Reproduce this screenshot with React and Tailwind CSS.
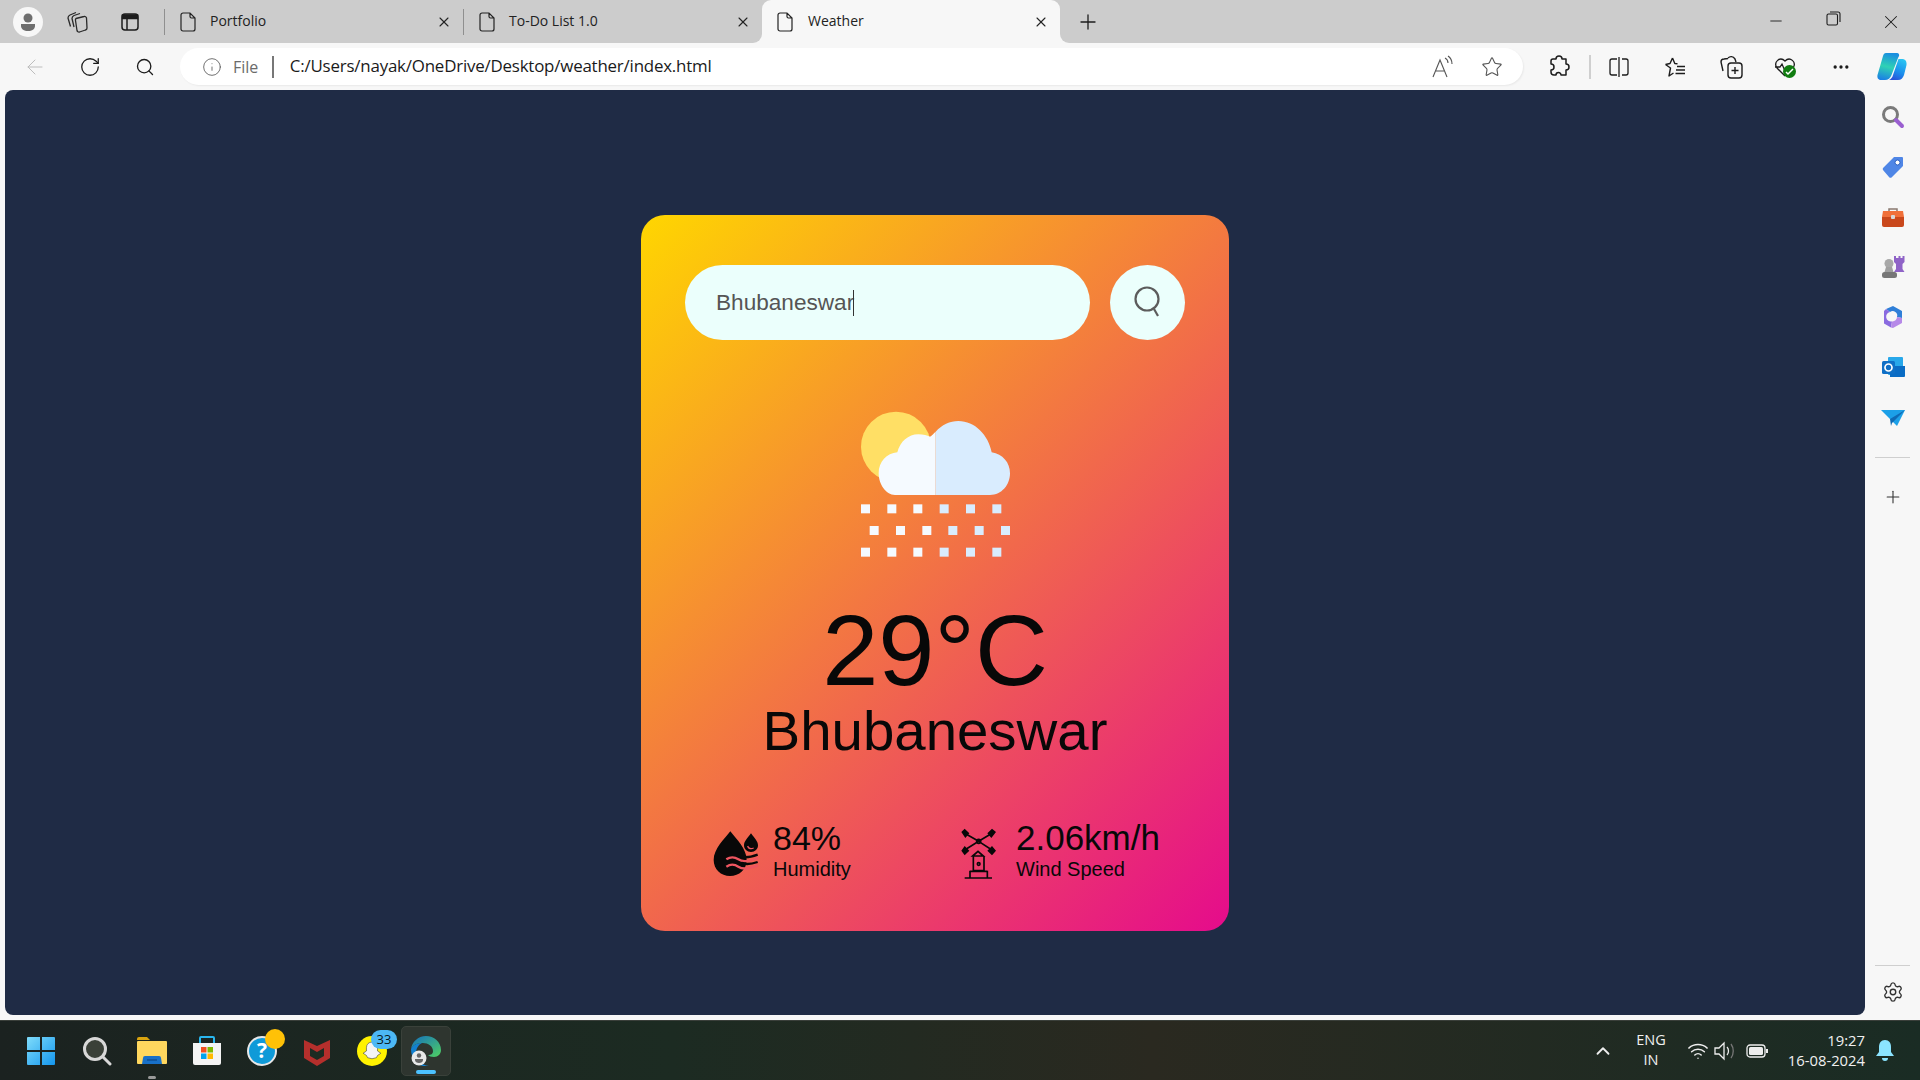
import React from "react";
import { ArrowLeft, RotateCw, Search, Info, Star, Ellipsis, Settings, ChevronUp, Wifi, X, Plus, Minus } from "lucide-react";

const FileIcon = () => (
  <svg width="17" height="20" viewBox="0 0 17 20" fill="none" stroke="#222" strokeWidth="1.2" className="shrink-0">
    <path d="M3 1h7l5 5v11a2 2 0 0 1-2 2H3a2 2 0 0 1-2-2V3a2 2 0 0 1 2-2zM10 1v3.5a1.5 1.5 0 0 0 1.5 1.5H15" />
  </svg>
);

const Tab = ({ title, active }) => (
  <div className={active ? "relative flex w-[298px] h-[43px] items-center pl-[15px] pr-[11px] bg-[#f7f7f7] rounded-t-[9px]" : "flex w-[298px] h-[43px] items-center pl-[15px] pr-[11px]"}>
    <FileIcon />
    <span className={active ? "ml-[14px] mb-[2px] text-[14px] text-[#222]" : "ml-[13px] mb-[2px] text-[14px] text-[#222]"}>{title}</span>
    <X size={16} strokeWidth={1.6} color="#222" className="ml-auto" />
    {active && (
      <>
        <div className="absolute left-[-9px] bottom-0 w-[9px] h-[9px] bg-[#f7f7f7]"><div className="w-full h-full bg-[#cccccc] rounded-br-[9px]" /></div>
        <div className="absolute right-[-9px] bottom-0 w-[9px] h-[9px] bg-[#f7f7f7]"><div className="w-full h-full bg-[#cccccc] rounded-bl-[9px]" /></div>
      </>
    )}
  </div>
);

const Sep = () => <div className="w-px h-[26px] bg-[#8f8f8f] shrink-0" />;

const WeatherIcon = () => (
  <svg width="150" height="150" viewBox="120 60 450 450" className="block mx-auto">
    <circle cx="228" cy="170" r="105" fill="#ffdf65" />
    <path d="M347 315H225C197 315 176 282 176 250C176 215 200 190 232 187C240 155 265 133 295 133C310 133 322 136 330 140C336 136 341 130 347 125Z" fill="#f5faff" />
    <path d="M347 315V125C365 105 390 93 415 93C465 93 505 135 515 187C548 192 570 218 570 250C570 285 545 315 510 315Z" fill="#d9ecfe" />
    {[343, 473].map((y) =>
      [123, 202, 280, 359, 438, 517].map((x, i) => <rect key={`${y}-${x}`} x={x} y={y} width="27" height="27" fill={i < 3 ? "#f5faff" : "#d9ecfe"} />)
    )}
    {[149, 228, 307, 385, 464, 543].map((x, i) => <rect key={x} x={x} y="408" width="27" height="27" fill={i < 3 ? "#f5faff" : "#d9ecfe"} />)}
  </svg>
);

const HumidityIcon = () => (
  <svg width="46" height="48" viewBox="66 88 138 144" className="shrink-0">
    <path d="M118 92C100 115 68 145 68 178C68 206 90 226 117 226C145 226 167 206 167 178C167 145 136 115 118 92Z" fill="#080808" />
    <path d="M180 98C170 112 159 122 159 134C159 146 168 154 180 154C192 154 201 146 201 134C201 122 190 112 180 98Z" fill="#080808" />
    <path d="M170 136C172 144 180 146 188 142" stroke="#ee5560" strokeWidth="4" fill="none" />
    <path d="M106 176C118 168 130 168 142 176C154 184 168 184 201 172" stroke="#ee5560" strokeWidth="7" fill="none" />
    <path d="M106 198C118 190 130 190 142 198C154 206 168 206 201 194" stroke="#ee5560" strokeWidth="7" fill="none" />
    <path d="M148 166C158 172 172 172 200 162M152 186C162 192 176 192 200 184" stroke="#080808" strokeWidth="7" fill="none" />
  </svg>
);

const WindIcon = () => (
  <svg width="38" height="52" viewBox="812 82 114 156" className="shrink-0" fill="none" stroke="#080808" strokeWidth="5">
    <path d="M868 122L826 98M868 122L908 98M868 122L826 148M868 122L908 148" />
    <path d="M816 94L826 84L840 98L828 112ZM920 94L908 84L894 98L906 112ZM816 150L826 136L840 150L826 164ZM920 150L908 136L894 150L908 164Z" fill="#080808" stroke="none" />
    <circle cx="868" cy="122" r="6" />
    <path d="M850 166L866 152L882 166ZM852 166V210H884V166M842 210V232M894 210V232M842 212H894M826 232H908" />
    <circle cx="868" cy="190" r="4" />
  </svg>
);

const Copilot = () => (
  <svg width="30" height="27" viewBox="0 0 30 27">
    <defs>
      <linearGradient id="cpa" x1="0.5" y1="0" x2="0.3" y2="1"><stop offset="0" stopColor="#1a8fe0" /><stop offset="0.5" stopColor="#2fd2b4" /><stop offset="1" stopColor="#1b80e4" /></linearGradient>
      <linearGradient id="cpb" x1="0.7" y1="0" x2="0.3" y2="1"><stop offset="0" stopColor="#2ac4f2" /><stop offset="0.6" stopColor="#1b8cec" /><stop offset="1" stopColor="#2a52d8" /></linearGradient>
    </defs>
    <path d="M9 0H20C22 0 22.500 2 22 3L21 5L14.500 22C13.500 25 11 27 8 27H4C1 27 0 24.500 .5 22L6 3C6.500 1 7.500 0 9 0Z" fill="url(#cpa)" />
    <path d="M21.500 6H25C28 6 30 8 29.500 12L27 22C26 25 24 27 21 27H12C14 26 15.500 24.500 16 22Z" fill="url(#cpb)" />
  </svg>
);

const SideCell = ({ children }) => <div className="flex h-[50px] w-full items-center justify-center">{children}</div>;

const TaskCell = ({ children }) => <div className="relative flex h-[60px] w-[55px] shrink-0 items-center justify-center">{children}</div>;

export default function App() {
  return (
    <div className="flex flex-col h-screen w-screen overflow-hidden bg-[#f7f7f7] font-['Open_Sans',sans-serif]">
      {/* Tab strip */}
      <div className="flex h-[43px] shrink-0 items-center bg-[#cccccc]">
        <div className="flex w-[55px] justify-center">
          <div className="relative flex h-[30px] w-[30px] items-center justify-center overflow-hidden rounded-full bg-[#f7f7f7]">
            <svg width="18" height="20" viewBox="0 0 18 20" fill="#6e6e6e"><circle cx="9" cy="6" r="4.5" /><path d="M2 12h14v2c0 3-3 5-7 5s-7-2-7-5z" /></svg>
          </div>
        </div>
        <div className="flex w-[44px] justify-center">
          <svg width="22" height="22" viewBox="0 0 22 22" fill="none" stroke="#2a2a2a" strokeWidth="1.300" strokeLinejoin="round">
            <path d="M10 7.500l8-2a2 2 0 0 1 2.500 1.500l.5 10a2 2 0 0 1-1.500 2l-6 2a2 2 0 0 1-2.500-1.500l-1.500-10a2 2 0 0 1 .5-2z" />
            <path d="M8 16L6 7.500C6 6 7 5 8 4.500l6-2" />
            <path d="M4.500 15.500L2 7C2 5.500 3 4.500 4 4l6-2.500" />
          </svg>
        </div>
        <div className="flex w-[62px] justify-center">
          <svg width="20" height="20" viewBox="0 0 20 20" fill="none" stroke="#1c1c1c" strokeWidth="1.5"><rect x="2" y="2" width="16" height="16" rx="3" /><path d="M2.500 3h15v3.500h-15z" fill="#1c1c1c" /><path d="M7 6.500V18" /></svg>
        </div>
        <div className="ml-[3px] flex"><Sep /></div>
        <Tab title="Portfolio" />
        <Sep />
        <Tab title="To-Do List 1.0" />
        <Tab title="Weather" active />
        <div className="ml-[8px] flex w-[40px] justify-center"><Plus size={24} strokeWidth={1.3} color="#1c1c1c" /></div>
        <div className="ml-auto flex">
          <div className="flex w-[58px] justify-center"><Minus size={18} strokeWidth={1.2} color="#1c1c1c" className="ml-[2px] mt-[1px]" /></div>
          <div className="flex w-[58px] justify-center">
            <svg width="15" height="15" viewBox="0 0 15 15" fill="none" stroke="#1c1c1c" strokeWidth="1.1"><rect x="1" y="3" width="10.500" height="11" rx="1.500" /><path d="M4 1h8a2 2 0 0 1 2 2v8" /></svg>
          </div>
          <div className="flex w-[58px] justify-center"><X size={22} strokeWidth={1.1} color="#1c1c1c" /></div>
        </div>
      </div>

      {/* Toolbar */}
      <div className="flex h-[47px] shrink-0 items-center bg-[#f7f7f7]">
        <div className="flex w-[70px] justify-center"><ArrowLeft size={24} strokeWidth={1} color="#bdbdbd" /></div>
        <div className="flex w-[40px] justify-center"><RotateCw size={22} strokeWidth={1.4} color="#1c1c1c" /></div>
        <div className="flex w-[70px] justify-center"><Search size={20} strokeWidth={1.6} color="#1c1c1c" /></div>
        <div className="flex h-[37px] w-[1343px] items-center rounded-full bg-white pl-[22px] pr-[20px] shadow-[1px_1px_2px_rgba(0,0,0,0.06)]">
          <Info size={20} strokeWidth={1} color="#555" />
          <span className="ml-[11px] text-[16px] text-[#6b6b6b]">File</span>
          <div className="ml-[14px] h-[22px] w-[1.500px] bg-[#777]" />
          <span className="ml-[16px] mb-[1px] text-[16.900px] tracking-[-0.2px] text-[#1a1a1a]">C:/Users/nayak/OneDrive/Desktop/weather/index.html</span>
          <div className="ml-auto flex items-center gap-[28px]">
            <svg width="22" height="24" viewBox="0 0 22 24" fill="none" stroke="#555" strokeWidth="1.1"><path d="M2 22L9 5l7 17M5 16h8M14 3c2 1 3 3 3 5M17 1c3 2 4 5 4 8" /></svg>
            <Star size={22} strokeWidth={1.2} color="#555" />
          </div>
        </div>
        <div className="ml-[14px] flex w-[44px] justify-center">
          <svg width="22" height="24" viewBox="0 0 22 24" fill="none" stroke="#1c1c1c" strokeWidth="1.5" strokeLinejoin="round"><path d="M8 4a3 3 0 0 1 6 0h4v5a3 3 0 0 1 0 6v5h-5a2.500 2.500 0 0 0-5 0H6c-2 0-3-1-3-3v-2a3 3 0 0 0 0-6V6c0-1 1-2 2-2z" /></svg>
        </div>
        <div className="ml-[8px] h-[24px] w-[2px] bg-[#cfcfcf]" />
        <div className="flex w-[56px] justify-center">
          <svg width="20" height="22" viewBox="0 0 20 22" fill="none" stroke="#1c1c1c" strokeWidth="1.3"><path d="M10 1v20M8 3H3a2 2 0 0 0-2 2v12a2 2 0 0 0 2 2h5M13 3h4a2 2 0 0 1 2 2v12a2 2 0 0 1-2 2h-4" /></svg>
        </div>
        <div className="flex w-[56px] justify-center">
          <svg width="22" height="22" viewBox="0 0 22 22" fill="none" stroke="#1c1c1c" strokeWidth="1.4" strokeLinejoin="round"><path d="M8.500 2l2.300 5.500 2.700.3M1.500 8.500l5 3.500L5 20l4.500-3M8.500 2L6 7.500 1.500 8.500M13 10.500h8M12 14h9M11.500 17.500h9.500" /></svg>
        </div>
        <div className="flex w-[56px] justify-center">
          <svg width="24" height="24" viewBox="0 0 24 24" fill="none" stroke="#1c1c1c" strokeWidth="1.4"><rect x="9" y="8" width="14" height="15" rx="3" /><path d="M16 12v7M12.500 15.500h7M9 3.500l-4 .5c-2 0-3 1.500-3 3l2 9M9 3c2-2 5-2 7 1l1 3" /></svg>
        </div>
        <div className="relative flex w-[52px] justify-center">
          <svg width="22" height="20" viewBox="0 0 22 20" fill="none" stroke="#1c1c1c" strokeWidth="1.3"><path d="M11 19L3 11C-1 5 6-1 11 4c5-5 12 1 8 7M1 10h5l2-3 3 7 2-4h3" /></svg>
          <div className="absolute left-[24px] top-[8px] flex h-[13px] w-[13px] items-center justify-center rounded-full bg-[#107c10]">
            <svg width="9" height="9" viewBox="0 0 9 9" fill="none" stroke="#fff" strokeWidth="1.5"><path d="M1 5l2 2 5-5" /></svg>
          </div>
        </div>
        <div className="flex w-[60px] justify-center"><Ellipsis size={20} strokeWidth={2} color="#1c1c1c" /></div>
        <div className="flex w-[42px] justify-center"><Copilot /></div>
      </div>

      {/* Middle */}
      <div className="flex min-h-0 flex-1">
        <div className="ml-[5px] mb-[5px] w-[1860px] rounded-[8px] bg-[#1f2b45] pt-[125px]">
          <div className="mx-auto h-[716px] w-[588px] rounded-[24px] bg-[linear-gradient(135deg,#ffd600,#e50b8c)] px-[44px] pt-[50px] font-['Liberation_Sans',sans-serif]">
            <div className="flex items-center justify-between">
              <div className="flex h-[75px] w-[405px] items-center rounded-full bg-[#ebfffc] pl-[31px] text-[22.600px] text-[#555]">
                Bhubaneswar<span className="ml-[-1px] h-[26px] w-px bg-[#333]" />
              </div>
              <div className="flex h-[75px] w-[75px] items-center justify-center rounded-full bg-[#ebfffc]">
                <svg width="28" height="32" viewBox="0 0 28 32" fill="none" stroke="#5c5c5c" strokeWidth="2.200" className="mb-[2px]"><circle cx="13" cy="13" r="11.500" /><path d="M20 23l4 7" /></svg>
              </div>
            </div>
            <div className="mt-[70px]"><WeatherIcon /></div>
            <div className="mt-[41px] text-center text-[101px] leading-[98px] text-[#080808]">29°C</div>
            <div className="mt-[2px] text-center text-[56.400px] leading-[60px] text-[#080808]">Bhubaneswar</div>
            <div className="mt-[59px] flex pl-[28px] text-[#080808]">
              <div className="flex w-[247px] items-center">
                <HumidityIcon />
                <div className="ml-[14px] mb-[6px]">
                  <div className="text-[34px] leading-[36px]">84%</div>
                  <div className="text-[20px] leading-[24px] mt-[1px]">Humidity</div>
                </div>
              </div>
              <div className="flex items-center">
                <WindIcon />
                <div className="ml-[18px] mb-[6px]">
                  <div className="text-[35px] leading-[36px]">2.06km/h</div>
                  <div className="text-[20px] leading-[24px] mt-[1px]">Wind Speed</div>
                </div>
              </div>
            </div>
          </div>
        </div>

        {/* Sidebar */}
        <div className="flex w-[55px] flex-col items-center pt-[2px]">
          <SideCell>
            <svg width="24" height="24" viewBox="0 0 24 24" fill="none"><circle cx="9.500" cy="9.500" r="7" stroke="#7a7a7a" strokeWidth="3" /><path d="M15 15l6 6" stroke="#9a5fd0" strokeWidth="4" strokeLinecap="round" /></svg>
          </SideCell>
          <SideCell>
            <svg width="24" height="24" viewBox="0 0 24 24"><path d="M13 2h8a1 1 0 0 1 1 1v8L11 22a2 2 0 0 1-3 0L2 15a2 2 0 0 1 0-2z" fill="#4f86e6" /><circle cx="16.500" cy="7.500" r="2.500" fill="#fff" stroke="#2c5fc0" /></svg>
          </SideCell>
          <SideCell>
            <svg width="24" height="22" viewBox="0 0 24 22"><path d="M8 5V3h8v2" fill="none" stroke="#8a7a70" strokeWidth="1.5" /><path d="M2 5h20l1 6H1z" fill="#f0703a" /><path d="M1 11h22v8a2 2 0 0 1-2 2H3a2 2 0 0 1-2-2z" fill="#c9481c" /><rect x="10" y="9" width="4" height="4" rx="1" fill="#d8d8d8" /></svg>
          </SideCell>
          <SideCell>
            <svg width="24" height="24" viewBox="0 0 24 24">
              <path d="M13 1h2v2h2.500V1h2v2h2V1h2v6l-2 2v5l2 3H13l2-3V9l-2-2z" fill="#8f63c7" />
              <circle cx="8" cy="8.500" r="4.500" fill="#a8a8a8" />
              <path d="M5 12h6l1.500 5h-9z" fill="#a0a0a0" />
              <rect x="1" y="17" width="15" height="6" rx="2.500" fill="#777" />
            </svg>
          </SideCell>
          <SideCell>
            <svg width="24" height="24" viewBox="0 0 24 24">
              <path d="M12 1l9 5v7l-5-1a4.500 4.500 0 0 0-7-5L5 4z" fill="#2f7fd8" />
              <path d="M3 6l2-2 4 3a4.500 4.500 0 0 0 2 9.500l-1 6-7-4z" fill="#8a6be0" />
              <path d="M21 13v5l-9 5-2-.5 1-6a4.500 4.500 0 0 0 5-4.500z" fill="#b689e8" />
            </svg>
          </SideCell>
          <SideCell>
            <svg width="24" height="24" viewBox="0 0 24 24"><rect x="7" y="2" width="15" height="18" rx="1" fill="#28a8ea" /><path d="M9 11h15v10a1 1 0 0 1-1 1H9z" fill="#0a6cc4" /><rect x="1" y="6" width="13" height="13" rx="1.500" fill="#0f6fc6" /><circle cx="7.500" cy="12.500" r="3.500" fill="none" stroke="#fff" strokeWidth="1.700" /></svg>
          </SideCell>
          <SideCell>
            <svg width="24" height="20" viewBox="0 0 24 20"><path d="M0 3h24L16 19 9 12z" fill="#1ca0e8" /><path d="M9 12L24 3 11 16l-1 3z" fill="#0f6ab4" /></svg>
          </SideCell>
          <div className="mt-[15px] h-px w-[35px] bg-[#cfcfcf]" />
          <div className="mt-[14px] w-full"><SideCell><Plus size={20} strokeWidth={1.3} color="#333" /></SideCell></div>
          <div className="mt-auto h-px w-[35px] bg-[#cfcfcf]" />
          <div className="mb-[3px] flex h-[51px] items-center"><Settings size={22} strokeWidth={1.5} color="#333" /></div>
        </div>
      </div>

      {/* Taskbar */}
      <div className="flex h-[60px] shrink-0 items-center border-t border-[#3a3f3a] bg-[linear-gradient(90deg,#1b2220,#1c2b22_35%,#2a2920_60%,#1a2c24)] pl-[13px] font-['Open_Sans',sans-serif] text-white">
        <TaskCell>
          <svg width="30" height="30" viewBox="0 0 30 30">
            <defs><linearGradient id="win" x1="0" y1="0" x2="1" y2="1"><stop offset="0" stopColor="#7fdcfa" /><stop offset="1" stopColor="#1496ee" /></linearGradient></defs>
            <path d="M1 2a1 1 0 0 1 1-1h12v13H1zM16 1h12a1 1 0 0 1 1 1v12H16zM1 16h13v13H2a1 1 0 0 1-1-1zM16 16h13v12a1 1 0 0 1-1 1H16z" fill="url(#win)" />
          </svg>
        </TaskCell>
        <TaskCell>
          <svg width="30" height="30" viewBox="0 0 30 30" fill="none" stroke="#d8d8d8" className="ml-[3px]"><circle cx="13" cy="13" r="10.500" strokeWidth="3" fill="#3a4038" /><path d="M21 21l7 7" strokeWidth="3" strokeLinecap="round" /></svg>
        </TaskCell>
        <TaskCell>
          <svg width="32" height="28" viewBox="0 0 32 28" className="ml-[3px]"><path d="M1 2a2 2 0 0 1 2-2h8l3 3h-13z" fill="#d9a30f" /><rect x="1" y="4" width="30" height="23" rx="1" fill="#ffd75e" /><path d="M6 27l1-6a2 2 0 0 1 2-2h14a2 2 0 0 1 2 2l1 6z" fill="#1870c8" /><path d="M11 23h10" stroke="#0e4f96" strokeWidth="1.500" /></svg>
          <div className="absolute bottom-[2px] left-[25px] h-[3px] w-[8px] rounded-full bg-[#9a9a9a]" />
        </TaskCell>
        <TaskCell>
          <svg width="30" height="31" viewBox="0 0 30 31" className="ml-[3px]"><path d="M8 8V3a1 1 0 0 1 1-1h12a1 1 0 0 1 1 1v5" fill="none" stroke="#29b6ee" strokeWidth="2" /><path d="M1 8h28v20a2 2 0 0 1-2 2H3a2 2 0 0 1-2-2z" fill="#f4f4f4" /><rect x="9" y="12" width="5.500" height="5.500" fill="#f25022" /><rect x="15.500" y="12" width="5.500" height="5.500" fill="#7fba00" /><rect x="9" y="18.500" width="5.500" height="5.500" fill="#00a4ef" /><rect x="15.500" y="18.500" width="5.500" height="5.500" fill="#ffb900" /></svg>
        </TaskCell>
        <TaskCell>
          <div className="ml-[3px] flex h-[30px] w-[30px] items-center justify-center rounded-full border-2 border-[#e8e8e8] bg-[#0f9ad8] text-[21px] font-bold leading-none text-white">?</div>
          <div className="absolute left-[32px] top-[8px] h-[20px] w-[20px] rounded-full bg-[#ffc107]" />
        </TaskCell>
        <TaskCell>
          <svg width="28" height="30" viewBox="0 0 28 30" className="ml-[3px]"><path d="M1 4l13 6 13-6v18L14 30 1 22z" fill="#b52f2c" /><path d="M7 12l7 4 7-4v8l-7 4-7-4z" fill="#1c2b22" /></svg>
        </TaskCell>
        <TaskCell>
          <div className="ml-[3px] flex h-[30px] w-[30px] items-center justify-center rounded-full bg-[#fff200]">
            <svg width="20" height="20" viewBox="0 0 18 18"><path d="M9 1c3 0 5 2 5 5v3l3 2-3 2-1 2-4 1-4-1-1-2-3-2 3-2V6c0-3 2-5 5-5z" fill="#f4f4f4" stroke="#333" strokeWidth=".5" /></svg>
          </div>
          <div className="absolute left-[28px] top-[9px] flex h-[19px] w-[26px] items-center justify-center rounded-full bg-[#4cb8f5] text-[13px] leading-none text-[#0a1820]">33</div>
        </TaskCell>
        <div className="relative ml-[3px] flex h-[50px] w-[50px] shrink-0 items-center justify-center rounded-[5px] border border-[#3a413a] bg-[#2e352f]">
          <svg width="30" height="30" viewBox="0 0 30 30">
            <defs><linearGradient id="edge" x1="0" y1="0" x2="1" y2="1"><stop offset="0" stopColor="#1470c0" /><stop offset="1" stopColor="#50d060" /></linearGradient></defs>
            <path d="M15 0c8 0 15 6 15 14 0 4-3 7-7 7-3 0-5-1-6-2 3 0 5-1 5-4 0-5-5-8-10-8C6 7 2 9 0 13 1 6 7 0 15 0z" fill="url(#edge)" />
            <path d="M0 13c2-4 6-6 11-6-4 2-6 6-6 10 0 6 5 12 13 13-10 2-18-6-18-17z" fill="#1280d0" />
            <circle cx="8" cy="22" r="7.500" fill="#e8e8e8" />
            <circle cx="8" cy="19.500" r="2.200" fill="#666" />
            <path d="M4 23h8v1c0 2-2 3-4 3s-4-1-4-3z" fill="#666" />
          </svg>
          <div className="absolute bottom-[1px] h-[4px] w-[20px] rounded-full bg-[#4cc2ff]" />
        </div>

        <div className="ml-auto flex items-center pr-[23px]">
          <div className="flex w-[24px] justify-center"><ChevronUp size={22} strokeWidth={2} color="#eee" /></div>
          <div className="ml-[11px] w-[50px] text-center text-[14.500px] leading-[20px] text-[#f0f0f0] mb-[1px]">ENG<br />IN</div>
          <div className="ml-[9px] flex w-[26px] justify-center"><Wifi size={22} strokeWidth={1.6} color="#eee" /></div>
          <div className="ml-[1px] flex w-[26px] justify-center">
            <svg width="22" height="20" viewBox="0 0 22 20" fill="none" stroke="#eee" strokeWidth="1.300"><path d="M1 7v6h4l5 5V2L5 7zM13 6c2 2 2 6 0 8" /><path d="M17 3c3 4 3 10 0 14" stroke="#777" /></svg>
          </div>
          <div className="ml-[4px] flex w-[30px] justify-center">
            <svg width="22" height="14" viewBox="0 0 22 14"><rect x="1" y="1" width="18" height="12" rx="3" fill="none" stroke="#eee" strokeWidth="1.300" /><rect x="3" y="3" width="14" height="8" rx="1.500" fill="#eee" /><rect x="20" y="5" width="2" height="4" fill="#eee" /></svg>
          </div>
          <div className="ml-[1px] mb-[1px] w-[92px] text-right text-[14.800px] leading-[20px] text-[#f0f0f0]">19:27<br />16-08-2024</div>
          <div className="ml-[8px] flex w-[24px] justify-center">
            <svg width="18" height="21" viewBox="0 0 18 21" fill="#8be4ff"><path d="M9 0c4 0 6 3 6 7v5l3 4H0l3-4V7c0-4 2-7 6-7z" /><path d="M6 18h6a3 3 0 0 1-6 0z" /></svg>
          </div>
        </div>
      </div>
    </div>
  );
}
